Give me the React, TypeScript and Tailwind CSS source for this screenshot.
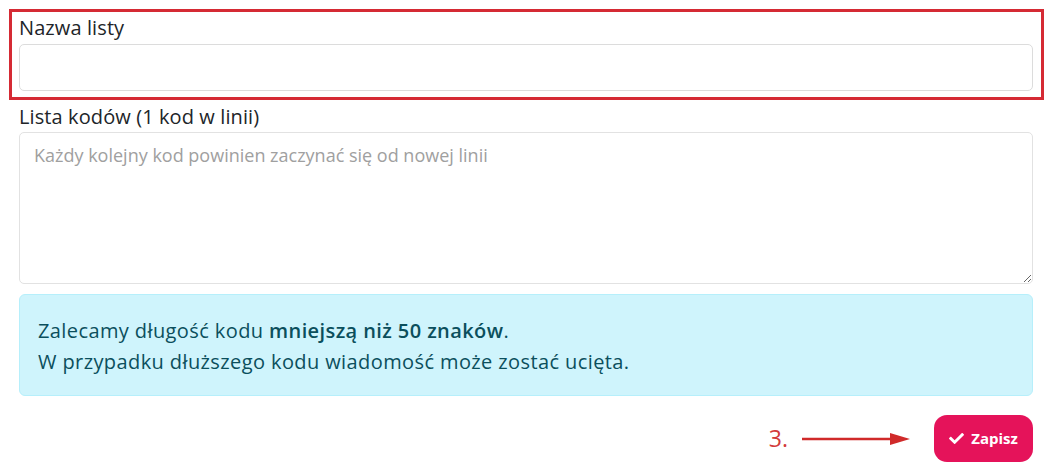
import { FaCheck } from 'react-icons/fa';

export default function App() {
  return (
    <div className="min-h-[471px] bg-white font-['Open_Sans',sans-serif] text-[#212529]">
      <div className="ml-[19px] w-[1014px] pt-[9px]">
        {/* Nazwa listy (highlighted) */}
        <div className="-mx-[10px] w-[1035px] border-[3px] border-[#d52a34] px-[7px] pt-[4px] pb-[6px]">
          <label className="mb-[4px] block text-[20px] leading-[24px] tracking-[0.1px]">Nazwa listy</label>
          <input
            type="text"
            className="block h-[47px] w-[1014px] rounded-[5px] border border-[#dcdcdc] bg-white px-3 text-[16px] outline-none"
          />
        </div>

        {/* Lista kodów */}
        <label className="mt-[5px] mb-[3px] block text-[20px] leading-[24px] tracking-[0.1px]">
          Lista kodów (1 kod w linii)
        </label>
        <textarea
          placeholder="Każdy kolejny kod powinien zaczynać się od nowej linii"
          className="block h-[152px] w-full rounded-[5px] border border-[#e2e2e2] bg-white px-[14px] py-[10px] text-[18px] leading-[24px] outline-none placeholder:text-[#a0a0a0]"
        />

        {/* Info */}
        <div className="mt-[10px] h-[102px] rounded-[6px] border border-[#b6effb] bg-[#cff4fc] px-[18px] pt-[20px] text-[20px] leading-[31px] tracking-[0.4px] text-[#0b4f5c]">
          <p>
            Zalecamy długość kodu <strong className="font-semibold">mniejszą niż 50 znaków</strong>.
          </p>
          <p>W przypadku dłuższego kodu wiadomość może zostać ucięta.</p>
        </div>

        {/* Actions */}
        <div className="mt-[19px] flex items-center justify-end">
          <span className="mr-[14px] text-[23px] leading-none text-[#d33b3b]">3.</span>
          <svg width="108" height="14" viewBox="0 0 108 14" className="mr-[24px]">
            <line x1="0" y1="7" x2="92" y2="7" stroke="#d02a2a" strokeWidth="2.5" />
            <polygon points="88,1 108,7 88,13" fill="#d02a2a" />
          </svg>
          <button className="flex h-[47px] w-[99px] items-center justify-center gap-[7px] rounded-[13px] bg-[#e5135a] text-[15px] font-bold text-white">
            <FaCheck className="h-[15px] w-[15px]" />
            Zapisz
          </button>
        </div>
      </div>
    </div>
  );
}
